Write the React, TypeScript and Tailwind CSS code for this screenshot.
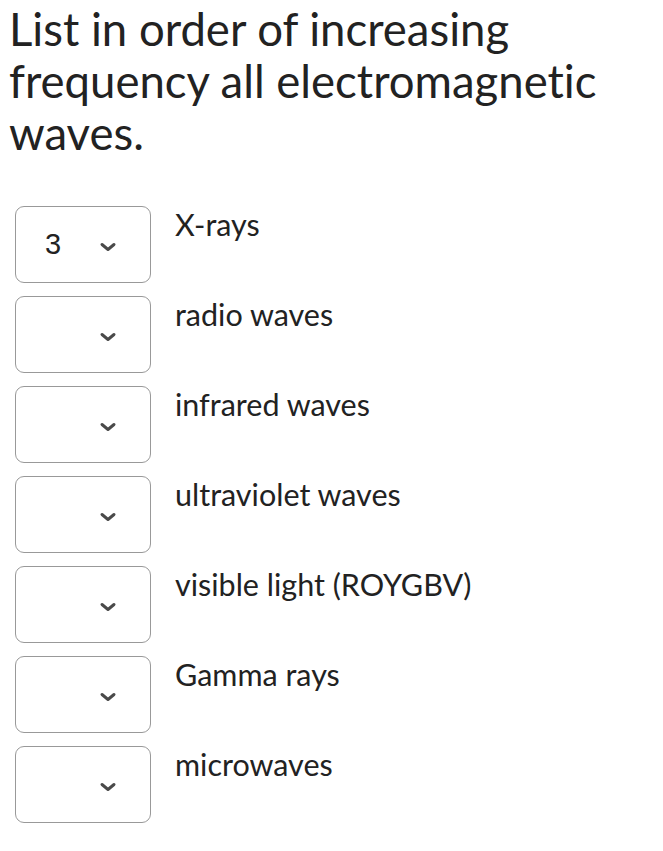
const items = [
  { value: '3', label: 'X-rays' },
  { value: '', label: 'radio waves' },
  { value: '', label: 'infrared waves' },
  { value: '', label: 'ultraviolet waves' },
  { value: '', label: 'visible light (ROYGBV)' },
  { value: '', label: 'Gamma rays' },
  { value: '', label: 'microwaves' },
];

function Chevron() {
  return (
    <svg width="20" height="12" viewBox="0 0 20 12" className="shrink-0">
      <path d="M4 3.5 L10 8.5 L16 3.5" fill="none" stroke="#4a4a4a" strokeWidth="3" strokeLinecap="round" strokeLinejoin="round" />
    </svg>
  );
}

export default function App() {
  return (
    <div className="min-h-[851px] bg-white text-[#222222] font-['Lato',sans-serif] [font-variant-ligatures:none]">
      <h1 className="pl-[9px] pt-[3px] text-[45.5px] leading-[52px] font-normal">
        List in order of increasing frequency all electromagnetic waves.
      </h1>

      <div className="mt-[47px] flex flex-col gap-[13px] pl-[15px]">
        {items.map((it) => (
          <div key={it.label} className="flex items-start">
            <div className="flex h-[77px] w-[136px] shrink-0 items-center rounded-[9px] border border-[#999999] pl-[29px] pr-[32px]">
              <span className="w-[40px] text-[29px] font-['Liberation_Sans',sans-serif] text-[#222222]">
                {it.value}
              </span>
              <span className="ml-auto mt-[4px]">
                <Chevron />
              </span>
            </div>
            <div className="ml-[24px] text-[30.5px] leading-[36px]">{it.label}</div>
          </div>
        ))}
      </div>
    </div>
  );
}
